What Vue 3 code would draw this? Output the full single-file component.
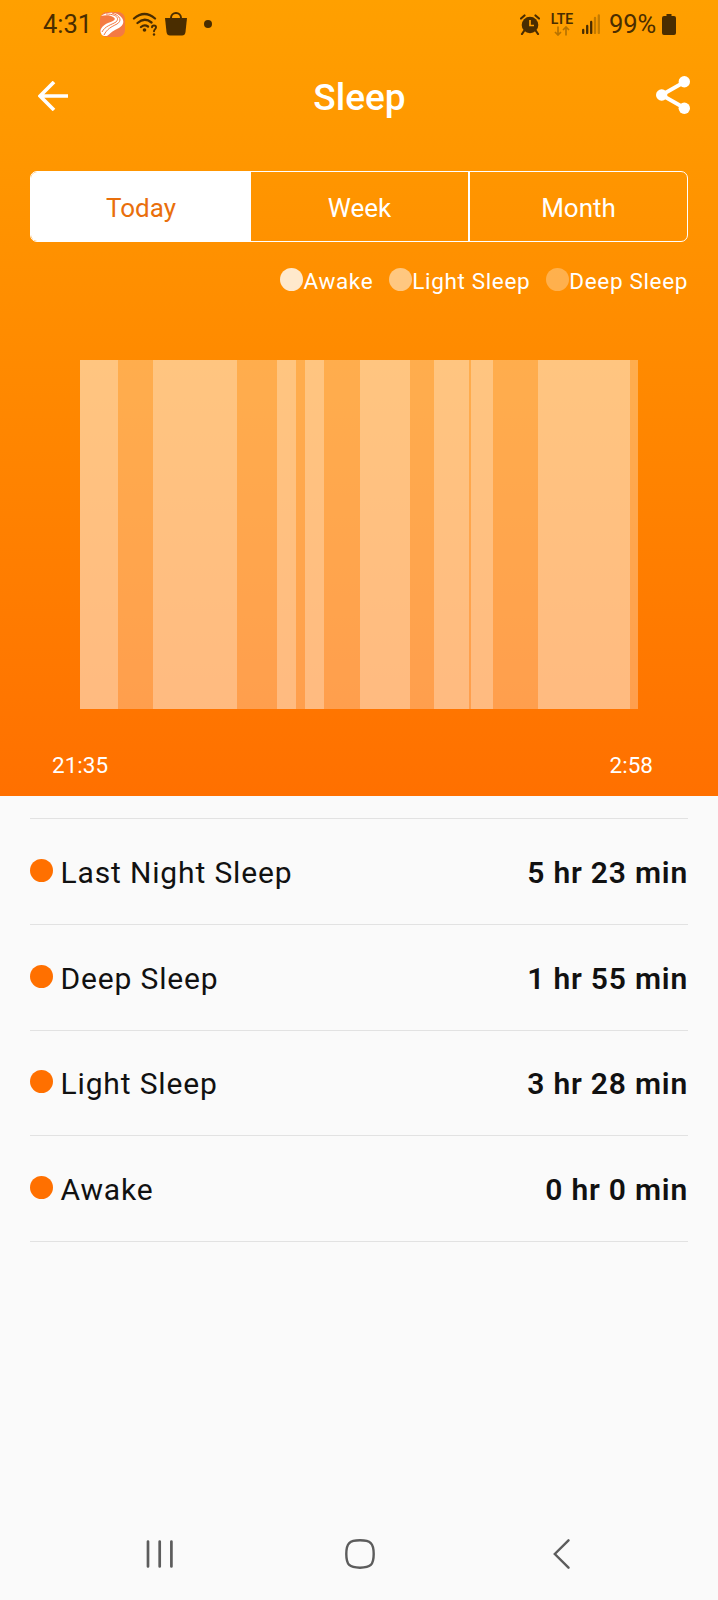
<template>
  <div class="screen">
    <section class="hero">
      <div class="status-bar">
        <span class="clock">4:31</span>
        <svg class="app-logo" viewBox="0 0 25 25">
          <rect width="25" height="25" rx="7" fill="#f47a42" />
          <path d="M1 4C8 -1 18 0 22 6C26 12 20 16 15 18C11 20 10 22 7 24H4Q1 23 .5 20C0 17 3 13 8 11C14 9 17 7 13 5C10 3 6 3 1 4Z" fill="#fff" />
          <path d="M6 2C16 2 20 6 16 10C11 13 5 14 2 20M12 1C21 4 22 9 17 12C11 15 7 17 4 23" fill="none" stroke="#f47a42" stroke-width="1" />
        </svg>
        <svg class="wifi" viewBox="0 0 26 24">
          <g fill="none" stroke="#4a2d00" stroke-width="2.3" stroke-linecap="round">
            <path d="M2 6.5Q12.500-2.500 23 6.500M5.500 11Q12.500 4.800 19.500 10.500M9 15Q12.500 12 16 14.500" />
            <path d="M20 15.200Q20 13.500 22 13.500Q24.200 13.500 24 15.500C24 17 22 17.300 22 19.300" stroke-width="1.900" />
          </g>
          <circle cx="12.500" cy="18" r="1.800" fill="#4a2d00" />
          <circle cx="22" cy="22.500" r="1.200" fill="#4a2d00" />
        </svg>
        <svg class="bag" viewBox="0 0 22 24">
          <path d="M6 7V6a5 5 0 0 1 10 0v1" fill="none" stroke="#4a2d00" stroke-width="2" />
          <path d="M0 6H22L20.500 20Q20 23.500 17 23.500H5Q2 23.500 1.500 20Z" fill="#4a2d00" />
        </svg>
        <span class="more-dot"></span>

        <div class="status-right">
          <svg class="alarm" viewBox="0 0 20 21">
            <circle cx="10" cy="11" r="8.300" fill="#4a2d00" />
            <path d="M1 4.500L4.500 1.500M19 4.500L15.500 1.500M4 17L2 20M16 17L18 20" stroke="#4a2d00" stroke-width="2.200" stroke-linecap="round" />
            <path d="M10 6V11.500H14" fill="none" stroke="#ffa000" stroke-width="1.700" />
          </svg>
          <div class="network">
            <span>LTE</span>
            <svg viewBox="0 0 16 10">
              <path d="M4 .5V9M1 6L4 9L7 6M12 9.500V1M9 4L12 1L15 4" fill="none" stroke="#b87300" stroke-width="1.700" />
            </svg>
          </div>
          <svg class="signal" viewBox="0 0 18 20">
            <path d="M1.200 16V19M5.200 12V19M9.200 8V19" stroke="#4a2d00" stroke-width="2.300" stroke-linecap="round" />
            <path d="M13 4V19M16.800 1.500V19" stroke="#c47b00" stroke-width="2.300" stroke-linecap="round" />
          </svg>
          <span class="percent">99%</span>
          <svg class="battery" viewBox="0 0 14 21">
            <path d="M4.500 0H9.500V2H12Q14 2 14 4V19Q14 21 12 21H2Q0 21 0 19V4Q0 2 2 2H4.500Z" fill="#4a2d00" />
          </svg>
        </div>
      </div>

      <header class="app-bar">
        <svg class="back" viewBox="0 0 30 30">
          <path d="M16 1L2 15L16 29M2 15H30" fill="none" stroke="#fff" stroke-width="3.600" />
        </svg>
        <h1>Sleep</h1>
        <svg class="share" viewBox="0 0 34 38">
          <path d="M28.500 6L5.500 19L28.500 32" fill="none" stroke="#fff" stroke-width="3.800" />
          <g fill="#fff">
            <circle cx="28.300" cy="5.800" r="5.700" />
            <circle cx="5.700" cy="19" r="5.700" />
            <circle cx="28.300" cy="32.200" r="5.700" />
          </g>
        </svg>
      </header>

      <nav class="tabs">
        <button
          v-for="tab in tabs"
          :key="tab"
          :class="['tab', { active: tab === activeTab }]"
          @click="activeTab = tab"
        >
          {{ tab }}
        </button>
      </nav>

      <div class="legend">
        <div v-for="item in legend" :key="item.type" class="legend-item">
          <span :class="['legend-dot', item.type]"></span>
          <span>{{ item.label }}</span>
        </div>
      </div>

      <div class="chart">
        <div
          v-for="(segment, index) in segments"
          :key="index"
          :class="['segment', segment.type]"
          :style="{ flexGrow: segment.size }"
        ></div>
      </div>

      <div class="times">
        <span>21:35</span>
        <span>2:58</span>
      </div>
    </section>

    <ul class="summary">
      <li v-for="row in summary" :key="row.label">
        <span class="row-dot"></span>
        <span class="row-label">{{ row.label }}</span>
        <strong>{{ row.value }}</strong>
      </li>
    </ul>

    <footer class="system-nav">
      <svg class="recents" viewBox="0 0 28 30">
        <path d="M2 2.500V27.500M13.700 2.500V27.500M25.400 2.500V27.500" stroke="#5c5c5c" stroke-width="2.700" stroke-linecap="round" />
      </svg>
      <svg class="home" viewBox="0 0 30 30">
        <path d="M15 1.300C25.500 1.300 28.700 4 28.700 15C28.700 26 25.500 28.700 15 28.700C4.500 28.700 1.300 26 1.300 15C1.300 4 4.500 1.300 15 1.300Z" fill="none" stroke="#5c5c5c" stroke-width="2.400" />
      </svg>
      <svg class="nav-back" viewBox="0 0 17 30">
        <path d="M15.500 1.300L1.800 15L15.500 28.700" fill="none" stroke="#5c5c5c" stroke-width="2.400" stroke-linecap="round" />
      </svg>
    </footer>
  </div>
</template>

<script setup>
import { ref } from "vue";

const tabs = ["Today", "Week", "Month"];
const activeTab = ref("Today");

const legend = [
  { type: "awake", label: "Awake" },
  { type: "light", label: "Light Sleep" },
  { type: "deep", label: "Deep Sleep" },
];

// Sleep phases in order, size is the relative duration
const segments = [
  { type: "light", size: 38 },
  { type: "deep", size: 34.5 },
  { type: "light", size: 84.5 },
  { type: "deep", size: 40 },
  { type: "light", size: 19 },
  { type: "deep", size: 8.5 },
  { type: "light", size: 19 },
  { type: "deep", size: 36.5 },
  { type: "light", size: 50 },
  { type: "deep", size: 24 },
  { type: "light", size: 35 },
  { type: "deep", size: 1.5 },
  { type: "light", size: 22.5 },
  { type: "deep", size: 45 },
  { type: "light", size: 91.5 },
  { type: "deep", size: 8.5 },
];

const summary = [
  { label: "Last Night Sleep", value: "5 hr 23 min" },
  { label: "Deep Sleep", value: "1 hr 55 min" },
  { label: "Light Sleep", value: "3 hr 28 min" },
  { label: "Awake", value: "0 hr 0 min" },
];
</script>

<style>
body {
  margin: 0;
  background: #fafafa;
}
</style>

<style scoped>
.screen {
  width: 718px;
  height: 1600px;
  display: flex;
  flex-direction: column;
  background: #fafafa;
  font-family: Roboto, "Liberation Sans", sans-serif;
  color: #111;
}

.screen * {
  box-sizing: border-box;
}

svg {
  display: block;
  flex-shrink: 0;
}

.hero {
  height: 796px;
  flex-shrink: 0;
  background: linear-gradient(#ffa000, #ff7000);
  color: #fff;
}

/* Status bar */
.status-bar {
  height: 48px;
  display: flex;
  align-items: center;
  padding: 0 42px 0 43px;
  color: #4a2d00;
}

.clock,
.percent {
  font-size: 25.5px;
  line-height: 48px;
}

.clock {
  width: 57px;
}

.app-logo {
  width: 25px;
  height: 25px;
}

.wifi {
  width: 26px;
  height: 24px;
  margin-left: 7px;
}

.bag {
  width: 22px;
  height: 24px;
  margin-left: 7px;
}

.more-dot {
  width: 8px;
  height: 8px;
  margin-left: 17px;
  border-radius: 50%;
  background: #4a2d00;
}

.status-right {
  display: flex;
  align-items: center;
  margin-left: auto;
}

.alarm {
  width: 20px;
  height: 21px;
}

.network {
  width: 24px;
  margin-left: 10px;
  display: flex;
  flex-direction: column;
  align-items: center;
  font-size: 14px;
  font-weight: 600;
  line-height: 12px;
}

.network svg {
  width: 16px;
  height: 10px;
  margin-top: 1px;
}

.signal {
  width: 18px;
  height: 20px;
  margin-left: 8px;
}

.percent {
  width: 53px;
  margin-left: 9px;
  letter-spacing: -0.1px;
}

.battery {
  width: 14px;
  height: 21px;
}

/* App bar */
.app-bar {
  height: 95px;
  display: flex;
  align-items: center;
  justify-content: space-between;
  padding: 0 28px 0 38px;
}

.back {
  width: 30px;
  height: 30px;
}

.app-bar h1 {
  margin: 3px 5px 0 0;
  font-size: 37px;
  font-weight: 500;
}

.share {
  width: 34px;
  height: 38px;
  margin-bottom: 1px;
}

/* Tabs */
.tabs {
  display: grid;
  grid-template-columns: 220px 219px 217px;
  width: 658px;
  height: 71px;
  margin: 28px 30px 0;
  border: 1px solid #fff;
  border-radius: 7px;
  overflow: hidden;
}

.tab {
  border: 0;
  padding: 3px 0 0;
  background: transparent;
  color: #fff;
  font: inherit;
  font-size: 26px;
}

.tab + .tab {
  border-right: 2px solid #fff;
}

.tab:last-child {
  border-right: 0;
}

.tab.active {
  background: #fff;
  color: #e96f0c;
}

/* Legend */
.legend {
  display: flex;
  justify-content: flex-end;
  gap: 16px;
  height: 23px;
  margin: 26px 30px 0;
  font-size: 22.5px;
  line-height: 27px;
  letter-spacing: 0.65px;
}

.legend-item {
  display: flex;
}

.legend-dot {
  width: 23px;
  height: 23px;
  border-radius: 50%;
}

.awake {
  background: rgba(255, 255, 255, 0.8);
}

.light {
  background: rgba(255, 255, 255, 0.5);
}

.deep {
  background: rgba(255, 255, 255, 0.3);
}

/* Chart */
.chart {
  display: flex;
  height: 348.5px;
  margin: 69px 80px 0;
}

.segment {
  flex-basis: 0;
}

.times {
  display: flex;
  justify-content: space-between;
  margin: 43.5px 65px 0 52px;
  font-size: 22.5px;
  line-height: 27px;
}

/* Summary rows */
.summary {
  width: 658px;
  margin: 22px 30px 0;
  padding: 0;
  border-top: 1px solid #e2e2e2;
  list-style: none;
}

.summary li {
  display: flex;
  align-items: center;
  height: 105.75px;
  padding-top: 2px;
  border-bottom: 1px solid #e2e2e2;
  font-size: 30px;
  letter-spacing: 0.85px;
}

.row-dot {
  width: 23px;
  height: 23px;
  margin: 0 7.5px 4px 0;
  border-radius: 50%;
  background: #ff7000;
}

.summary strong {
  margin-left: auto;
  font-weight: 600;
  letter-spacing: 0.8px;
}

/* System navigation */
.system-nav {
  display: flex;
  align-items: center;
  justify-content: space-between;
  height: 92px;
  margin-top: auto;
  padding: 0 148px 0 146px;
}

.recents {
  width: 28px;
  height: 30px;
}

.home {
  width: 30px;
  height: 30px;
  margin-right: 7px;
}

.nav-back {
  width: 17px;
  height: 30px;
}
</style>
